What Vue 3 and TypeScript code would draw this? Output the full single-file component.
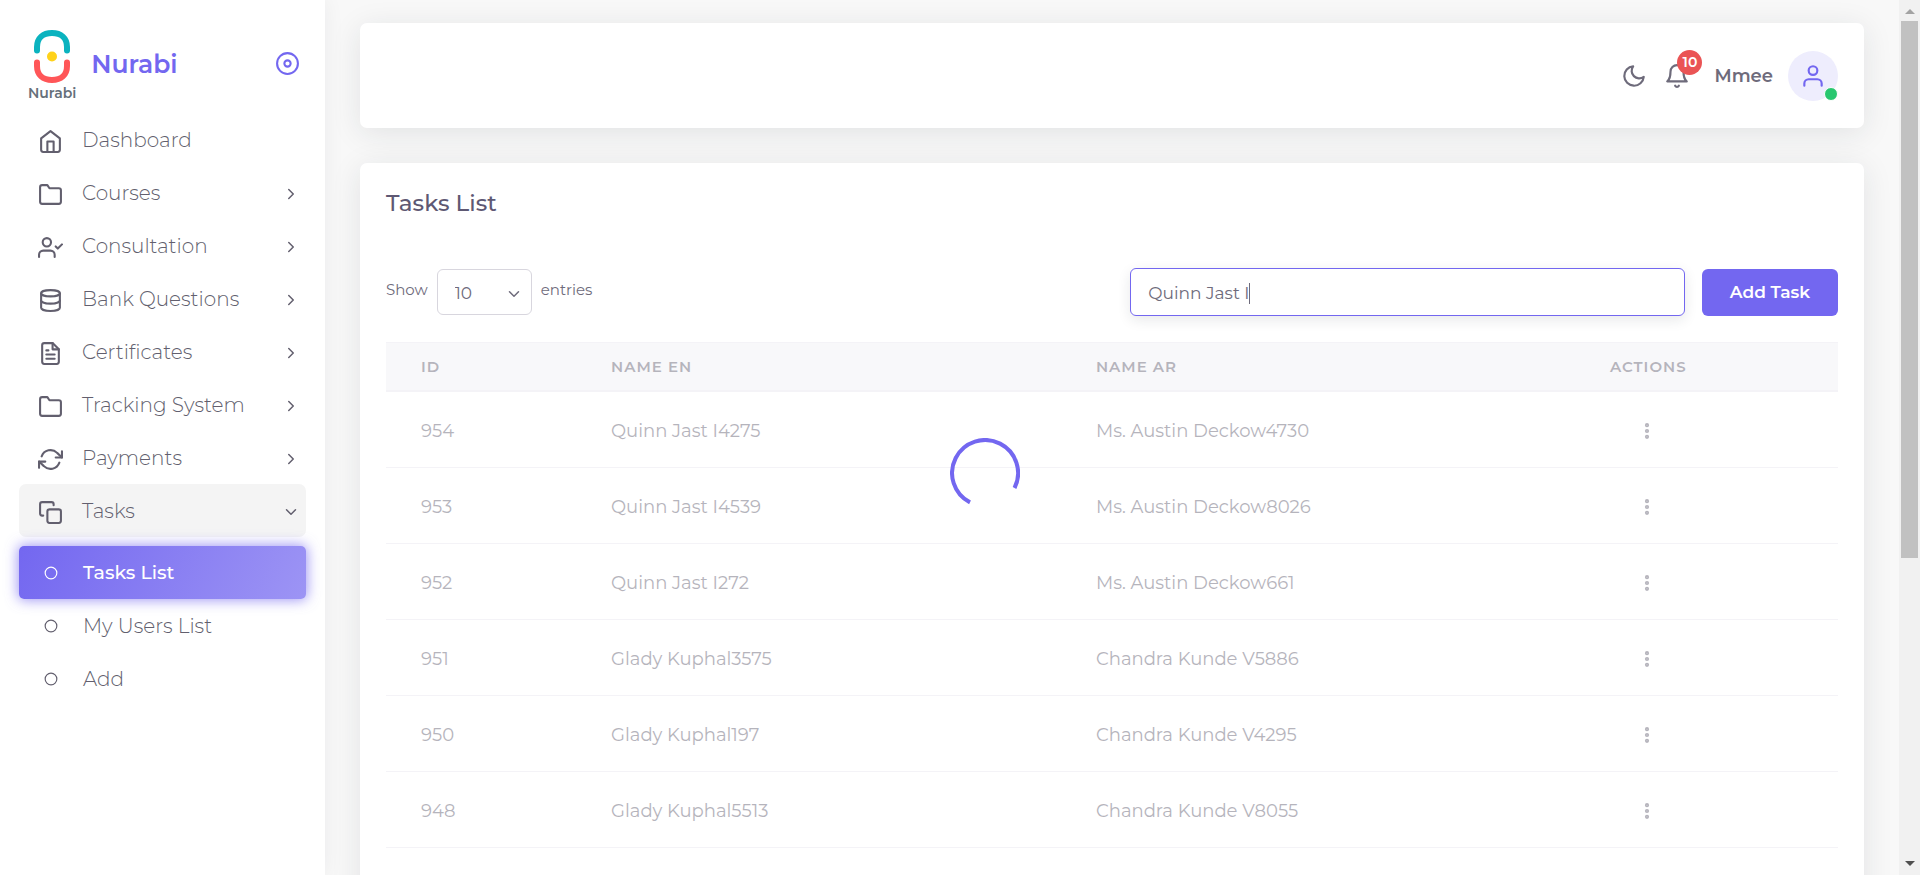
<script setup lang="ts">
import { ref } from 'vue'

interface MenuItem {
  label: string
  icon: string
  expandable: boolean
  open?: boolean
}

interface Task {
  id: number
  nameEn: string
  nameAr: string
}

const icons: Record<string, string> = {
  home: '<path d="M3 9l9-7 9 7v11a2 2 0 0 1-2 2H5a2 2 0 0 1-2-2z"/><polyline points="9 22 9 12 15 12 15 22"/>',
  folder: '<path d="M22 19a2 2 0 0 1-2 2H4a2 2 0 0 1-2-2V5a2 2 0 0 1 2-2h5l2 3h9a2 2 0 0 1 2 2z"/>',
  userCheck: '<path d="M16 21v-2a4 4 0 0 0-4-4H5a4 4 0 0 0-4 4v2"/><circle cx="8.5" cy="7" r="4"/><polyline points="17 11 19 13 23 9"/>',
  database: '<ellipse cx="12" cy="5" rx="9" ry="3"/><path d="M21 12c0 1.66-4 3-9 3s-9-1.34-9-3"/><path d="M3 5v14c0 1.66 4 3 9 3s9-1.34 9-3V5"/>',
  file: '<path d="M14 2H6a2 2 0 0 0-2 2v16a2 2 0 0 0 2 2h12a2 2 0 0 0 2-2V8z"/><polyline points="14 2 14 8 20 8"/><line x1="16" y1="13" x2="8" y2="13"/><line x1="16" y1="17" x2="8" y2="17"/><polyline points="10 9 9 9 8 9"/>',
  refresh: '<polyline points="23 4 23 10 17 10"/><polyline points="1 20 1 14 7 14"/><path d="M3.51 9a9 9 0 0 1 14.85-3.36L23 10M1 14l4.64 4.36A9 9 0 0 0 20.49 15"/>',
  copy: '<rect x="9" y="9" width="13" height="13" rx="2" ry="2"/><path d="M5 15H4a2 2 0 0 1-2-2V4a2 2 0 0 1 2-2h9a2 2 0 0 1 2 2v1"/>',
}

const menu: MenuItem[] = [
  { label: 'Dashboard', icon: 'home', expandable: false },
  { label: 'Courses', icon: 'folder', expandable: true },
  { label: 'Consultation', icon: 'userCheck', expandable: true },
  { label: 'Bank Questions', icon: 'database', expandable: true },
  { label: 'Certificates', icon: 'file', expandable: true },
  { label: 'Tracking System', icon: 'folder', expandable: true },
  { label: 'Payments', icon: 'refresh', expandable: true },
  { label: 'Tasks', icon: 'copy', expandable: true, open: true },
]

const subMenu = ['Tasks List', 'My Users List', 'Add']
const activeSub = ref('Tasks List')
const pageSize = ref('10')
const search = ref('Quinn Jast I')

const tasks: Task[] = [
  { id: 954, nameEn: 'Quinn Jast I4275', nameAr: 'Ms. Austin Deckow4730' },
  { id: 953, nameEn: 'Quinn Jast I4539', nameAr: 'Ms. Austin Deckow8026' },
  { id: 952, nameEn: 'Quinn Jast I272', nameAr: 'Ms. Austin Deckow661' },
  { id: 951, nameEn: 'Glady Kuphal3575', nameAr: 'Chandra Kunde V5886' },
  { id: 950, nameEn: 'Glady Kuphal197', nameAr: 'Chandra Kunde V4295' },
  { id: 948, nameEn: 'Glady Kuphal5513', nameAr: 'Chandra Kunde V8055' },
]
</script>

<template>
  <div class="app">
    <aside class="sidebar">
      <div class="brand">
        <a href="#" class="brand-link">
          <span class="logo">
            <svg class="logo-mark" viewBox="0 0 36 53" aria-hidden="true">
              <path d="M3 20.5V17C3 8 9 3 18 3s15 5 15 14v3.5" stroke="#0bb3bf" />
              <path d="M3 32.5V36c0 9 6 14 15 14s15-5 15-14v-3.5" stroke="#ff5658" />
              <circle cx="18" cy="26.5" r="5" fill="#ffd21a" />
            </svg>
            <span class="logo-text">Nurabi</span>
          </span>
          <span class="brand-name">Nurabi</span>
        </a>
        <button type="button" class="icon-button pin" aria-label="Toggle menu">
          <svg class="icon-25" viewBox="0 0 24 24"><circle cx="12" cy="12" r="10" /><circle cx="12" cy="12" r="3" /></svg>
        </button>
      </div>
      <nav class="menu">
        <a v-for="item in menu" :key="item.label" href="#" class="item" :class="{ open: item.open }">
          <svg class="icon-25" viewBox="0 0 24 24" v-html="icons[item.icon]"></svg>
          <span class="label">{{ item.label }}</span>
          <svg v-if="item.expandable" class="arrow" viewBox="0 0 24 24">
            <polyline :points="item.open ? '6 9 12 15 18 9' : '9 18 15 12 9 6'" />
          </svg>
        </a>
        <div class="sub">
          <a
            v-for="name in subMenu"
            :key="name"
            href="#"
            class="item"
            :class="{ active: name === activeSub }"
            @click.prevent="activeSub = name"
          >
            <svg class="dot" viewBox="0 0 24 24"><circle cx="12" cy="12" r="10" /></svg>
            <span class="label">{{ name }}</span>
          </a>
        </div>
      </nav>
    </aside>

    <main class="content">
      <header class="card topbar">
        <button type="button" class="icon-button" aria-label="Dark mode">
          <svg class="icon-26" viewBox="0 0 24 24"><path d="M21 12.79A9 9 0 1 1 11.21 3 7 7 0 0 0 21 12.79z" /></svg>
        </button>
        <button type="button" class="icon-button bell" aria-label="Notifications">
          <svg class="icon-26" viewBox="0 0 24 24"><path d="M18 8A6 6 0 0 0 6 8c0 7-3 9-3 9h18s-3-2-3-9" /><path d="M13.73 21a2 2 0 0 1-3.46 0" /></svg>
          <span class="badge">10</span>
        </button>
        <a href="#" class="user">
          <span>Mmee</span>
          <span class="avatar">
            <svg class="icon-26" viewBox="0 0 24 24"><path d="M20 21v-2a4 4 0 0 0-4-4H8a4 4 0 0 0-4 4v2" /><circle cx="12" cy="7" r="4" /></svg>
            <span class="status"></span>
          </span>
        </a>
      </header>

      <section class="card list">
        <h1>Tasks List</h1>
        <div class="tools">
          <label for="size">Show</label>
          <span class="select-wrap">
            <select id="size" v-model="pageSize">
              <option>10</option>
              <option>25</option>
              <option>50</option>
            </select>
            <svg class="arrow" viewBox="0 0 24 24"><polyline points="6 9 12 15 18 9" /></svg>
          </span>
          <label for="size">entries</label>
          <label class="search">
            <input v-model="search" type="text" aria-label="Search" />
            <span class="caret"></span>
          </label>
          <button type="button" class="add">Add Task</button>
        </div>

        <table>
          <thead>
            <tr>
              <th class="c-id">ID</th>
              <th class="c-en">Name En</th>
              <th class="c-ar">Name Ar</th>
              <th>Actions</th>
            </tr>
          </thead>
          <tbody>
            <tr v-for="task in tasks" :key="task.id">
              <td>{{ task.id }}</td>
              <td>{{ task.nameEn }}</td>
              <td>{{ task.nameAr }}</td>
              <td>
                <button type="button" class="icon-button more" aria-label="Actions">
                  <svg class="dots" viewBox="0 0 24 24"><circle cx="12" cy="12" r="1" /><circle cx="12" cy="5" r="1" /><circle cx="12" cy="19" r="1" /></svg>
                </button>
              </td>
            </tr>
          </tbody>
        </table>
        <svg class="spinner" viewBox="0 0 70 70" role="img" aria-label="Loading">
          <path d="M64.5 50A33 33 0 1 0 20 64.4" />
        </svg>
      </section>
    </main>

    <div class="scrollbar" aria-hidden="true">
      <svg class="tri up" viewBox="0 0 10 5"><path d="M0 5L5 0l5 5z" /></svg>
      <div class="track"><div class="thumb"></div></div>
      <svg class="tri down" viewBox="0 0 10 5"><path d="M0 0h10L5 5z" /></svg>
    </div>
  </div>
</template>

<style>
body {
  margin: 0;
}
</style>

<style scoped>
* {
  box-sizing: border-box;
}
.app {
  display: flex;
  height: 100vh;
  overflow: hidden;
  background: #f8f8f8;
  color: #6e6b7b;
  font-family: Montserrat, Inter, "Open Sans", sans-serif;
  font-size: 18px;
  line-height: 26px;
}
a {
  color: inherit;
  text-decoration: none;
}
svg {
  display: block;
  flex: none;
  fill: none;
  stroke: currentColor;
  stroke-width: 2;
  stroke-linecap: round;
  stroke-linejoin: round;
}
button,
input,
select {
  font: inherit;
  color: inherit;
}
.icon-button {
  display: block;
  padding: 0;
  border: 0;
  background: none;
}
.icon-26 {
  width: 26px;
  height: 26px;
}
.icon-25 {
  width: 25px;
  height: 25px;
}
.arrow {
  width: 18px;
  height: 18px;
}

.sidebar {
  flex: none;
  width: 325px;
  background: #fff;
  box-shadow: 0 0 20px rgba(34, 41, 47, 0.06);
  z-index: 1;
}
.brand {
  display: flex;
  align-items: flex-start;
  justify-content: space-between;
  height: 113px;
  padding: 30px 25px 0 28px;
}
.brand-link {
  display: flex;
  gap: 15px;
}
.logo {
  display: flex;
  flex-direction: column;
  align-items: center;
}
.logo-mark {
  width: 36px;
  height: 53px;
  stroke: none;
  stroke-width: 6;
}
.logo-text {
  color: #66707a;
  font-size: 14px;
  font-weight: 600;
  line-height: 20px;
}
.brand-name {
  color: #7367f0;
  font-size: 25px;
  font-weight: 600;
  line-height: 68px;
}
.pin {
  margin-top: 21px;
  color: #7367f0;
}
.menu {
  padding: 0 19px;
  color: #625f6e;
}
.item {
  display: flex;
  align-items: center;
  height: 53px;
  padding: 0 6px 0 19px;
  border-radius: 7px;
  font-size: 20px;
  font-weight: 300;
}
.item .icon-25 {
  margin-top: 4px;
}
.item .arrow {
  margin-top: 2px;
}
.item .label {
  flex: 1;
  padding-left: 19px;
}
.item.open {
  background: #f4f4f4;
}
.sub {
  padding-top: 9px;
}
.sub .item {
  padding-left: 25px;
  border-radius: 5px;
}
.sub .item .label {
  padding-left: 25px;
}
.sub .item.active {
  background: linear-gradient(118deg, #7367f0, rgba(115, 103, 240, 0.7));
  box-shadow: 0 0 13px 1px rgba(115, 103, 240, 0.7);
  color: #fff;
  font-size: 19px;
  font-weight: 500;
}
.dot {
  width: 14px;
  height: 14px;
}

.content {
  display: flex;
  flex: 1;
  flex-direction: column;
  gap: 35px;
  min-width: 0;
  padding: 23px 35px 0;
}
.card {
  background: #fff;
  border-radius: 7px;
  box-shadow: 0 5px 30px rgba(34, 41, 47, 0.1);
}
.topbar {
  display: flex;
  flex: none;
  align-items: center;
  justify-content: flex-end;
  gap: 17px;
  height: 105px;
  padding: 0 26px;
}
.bell {
  position: relative;
}
.badge {
  position: absolute;
  top: -13px;
  right: -12px;
  width: 25px;
  height: 25px;
  border-radius: 50%;
  background: #ea5455;
  color: #fff;
  font-size: 14px;
  font-weight: 600;
  line-height: 25px;
  text-align: center;
}
.user {
  display: flex;
  align-items: center;
  gap: 15px;
  margin-left: 7px;
  font-weight: 600;
}
.avatar {
  position: relative;
  display: flex;
  align-items: center;
  justify-content: center;
  width: 50px;
  height: 50px;
  border-radius: 50%;
  background: #eeedfd;
  color: #7367f0;
}
.status {
  position: absolute;
  right: 0;
  bottom: 0;
  width: 14px;
  height: 14px;
  border: 1px solid #fff;
  border-radius: 50%;
  background: #28c76f;
}

.list {
  position: relative;
  flex: none;
  height: 1200px;
  padding: 26px;
}
h1 {
  margin: 0;
  color: #5e5873;
  font-size: 23px;
  font-weight: 500;
  line-height: 28px;
}
.tools {
  display: flex;
  align-items: center;
  margin: 51px 0 26px;
  font-size: 15px;
}
.tools > label:not(.search) {
  padding-bottom: 4px;
}
.select-wrap {
  position: relative;
  margin: 0 9px;
}
select {
  display: block;
  width: 95px;
  height: 46px;
  padding: 2px 17px 0;
  border: 1px solid #d8d6de;
  border-radius: 6px;
  background: #fff;
  font-size: 17px;
  appearance: none;
}
.select-wrap .arrow {
  position: absolute;
  top: 16px;
  right: 9px;
  pointer-events: none;
}
.search {
  display: flex;
  align-items: center;
  width: 38.2%;
  height: 48px;
  margin: 0 17px 0 auto;
  padding: 2px 17px 0;
  border: 1px solid #7367f0;
  border-radius: 6px;
  background: #fff;
  box-shadow: 0 4px 13px rgba(34, 41, 47, 0.1);
  font-size: 17px;
}
.search input {
  field-sizing: content;
  min-width: 0;
  padding: 0;
  border: 0;
  outline: 0;
  background: none;
  caret-color: transparent;
}
.caret {
  width: 1px;
  height: 21px;
  background: #6e6b7b;
}
.add {
  width: 136px;
  height: 47px;
  padding: 0;
  border: 0;
  border-radius: 6px;
  background: #7367f0;
  color: #fff;
  font-size: 17px;
  font-weight: 600;
}

table {
  width: 100%;
  border-collapse: separate;
  border-spacing: 0;
  table-layout: fixed;
  opacity: 0.5;
}
th {
  height: 50px;
  padding: 1px 35px 0;
  border-top: 1px solid #ebe9f1;
  border-bottom: 2px solid #ebe9f1;
  background: #f3f2f7;
  font-size: 15px;
  font-weight: 600;
  letter-spacing: 1px;
  text-align: left;
  text-transform: uppercase;
}
td {
  height: 76px;
  padding: 2px 35px 0;
  border-bottom: 1px solid #ebe9f1;
}
.c-id {
  width: 190px;
}
.c-en {
  width: 33.4%;
}
.c-ar {
  width: 35.4%;
}
.more {
  margin-left: 27px;
}
.dots {
  width: 20px;
  height: 20px;
  stroke-width: 3;
}
.spinner {
  position: absolute;
  top: 275px;
  left: 39.2%;
  width: 70px;
  height: 70px;
  color: #7367f0;
  stroke-width: 4;
  stroke-linecap: butt;
}

.scrollbar {
  display: flex;
  flex: none;
  flex-direction: column;
  align-items: center;
  width: 21px;
  padding: 9px 0;
  background: #f1f1f1;
}
.tri {
  width: 10px;
  height: 5px;
  stroke: none;
}
.up {
  fill: #a3a3a3;
}
.down {
  fill: #505050;
}
.track {
  flex: 1;
  width: 17px;
  padding: 7px 0;
}
.thumb {
  height: 64.5%;
  background: #c1c1c1;
}
</style>
